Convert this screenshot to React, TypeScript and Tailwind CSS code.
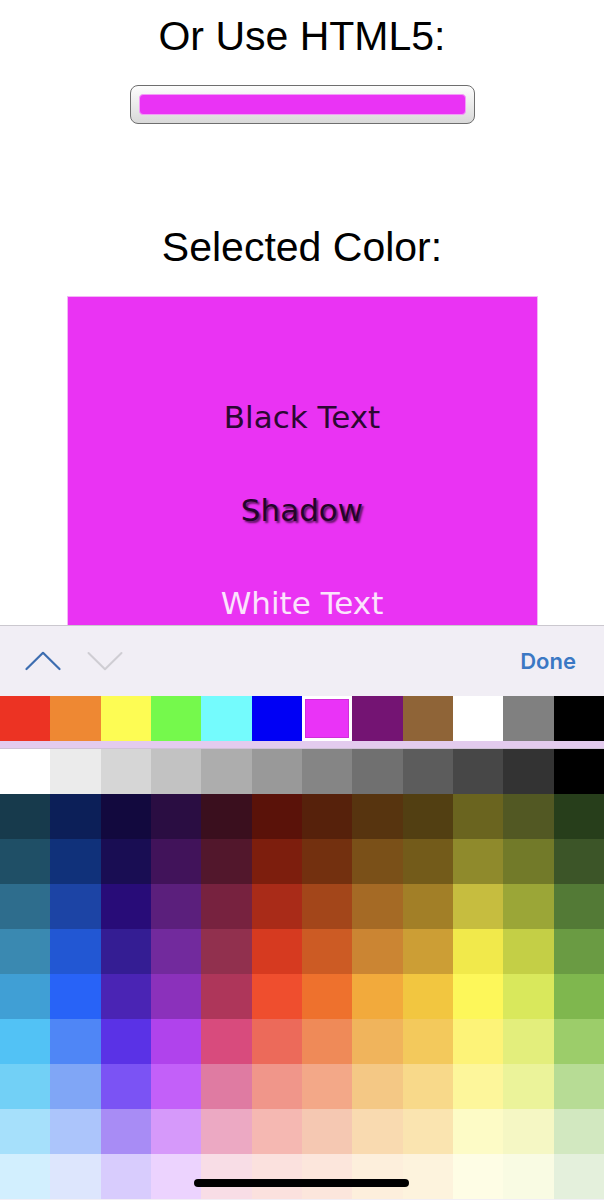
import React from "react";

const topRow = [
  "#ec3323", "#ee8833", "#fdfc54", "#75f94c", "#74fbfd", "#0000f5",
  "SEL", "#741473", "#8f6437", "#ffffff", "#808080", "#000000",
];

const grid: string[][] = [
  ["#ffffff", "#ebebeb", "#d6d6d6", "#c2c2c2", "#adadad", "#999999", "#858585", "#707070", "#5c5c5c", "#474747", "#333333", "#000000"],
  ["#173a4c", "#0c1f58", "#12093e", "#2a0d42", "#3a0f1e", "#5a1209", "#56210b", "#57340f", "#523f12", "#6a641f", "#525823", "#273e1b"],
  ["#1f4f66", "#10317a", "#190d53", "#41135a", "#52172c", "#7d1e0d", "#73300f", "#7a5018", "#735b1a", "#8f8a2c", "#727a29", "#3c5528"],
  ["#2e6d8d", "#1c44a5", "#280c78", "#5b1f7c", "#77223f", "#a92b18", "#a3461a", "#a56a25", "#a27f27", "#c6bd3f", "#9ba637", "#537a36"],
  ["#3a89b1", "#2257d3", "#341d93", "#722a9d", "#91304e", "#d63a20", "#cc5b24", "#cb8533", "#cc9e35", "#f1e94b", "#c4cf46", "#6a9b43"],
  ["#409fd5", "#2863f7", "#4a24b4", "#8b31bb", "#ae365a", "#ef4e2e", "#ee712d", "#f2aa3c", "#f2c640", "#fdf75a", "#d9e85c", "#7fb74e"],
  ["#52c2f5", "#4f86f6", "#5a32e6", "#b043ec", "#d84b7d", "#ec6a5a", "#ef8a58", "#f0b45c", "#f3c95c", "#fdf378", "#e3ee7c", "#9ccd6a"],
  ["#72d0f6", "#80a6f6", "#7b53f4", "#c360f9", "#df7ba2", "#f0968a", "#f3a888", "#f4c885", "#f8d98a", "#fdf69b", "#ebf39a", "#b7dc95"],
  ["#a6e0fb", "#acc5fb", "#a88cf5", "#d699fa", "#eca9c3", "#f5b8b2", "#f5c8b2", "#f9dab0", "#fae4b0", "#fdfbc6", "#f5f7c4", "#d2e8c0"],
  ["#d2effe", "#dde6fd", "#d8ccfd", "#ecd3fe", "#f8dde6", "#fbe1de", "#fce6dc", "#fdefdc", "#fdf3dd", "#fefde5", "#f9fbe3", "#e4f0dc"],
];

export default function App() {
  return (
    <div className="relative h-[1200px] w-[604px] overflow-hidden bg-white">
      {/* Page content */}
      <div className="flex flex-col items-center pt-[13px]">
        <h1
          className="text-[41px] leading-[47px] text-black"
          style={{ fontFamily: '"Liberation Sans", Arial, sans-serif' }}
        >
          Or Use HTML5:
        </h1>
        <div className="mt-[25px] flex h-[39px] w-[345px] items-center justify-center rounded-[8px] border border-[#6e6e6e] bg-gradient-to-b from-[#fdfdfd] to-[#d9d9d9] px-[8px]">
          <div className="h-[21px] w-full rounded-[4px] border border-[#f29cf7] bg-[#ea33f5]" />
        </div>
        <h2
          className="mt-[100px] text-[41px] leading-[47px] text-black"
          style={{ fontFamily: '"Liberation Sans", Arial, sans-serif' }}
        >
          Selected Color:
        </h2>
        <div
          className="mt-[25px] flex h-[420px] w-[471px] flex-col items-center gap-[57px] border border-[#f3b6f6] bg-[#ea33f3] pt-[102px] text-[31px] leading-[36px]"
          style={{ fontFamily: '"DejaVu Sans", Verdana, sans-serif' }}
        >
          <div className="text-[#2c0832]">Black Text</div>
          <div className="text-[#24042a] [text-shadow:2px_2px_2px_rgba(0,0,0,0.6)]">Shadow</div>
          <div className="text-[#fbe4fc]">White Text</div>
        </div>
      </div>

      {/* Color picker overlay */}
      <div className="absolute inset-x-0 top-[625px] bottom-0 flex flex-col border-t border-[#cbc8cf] bg-[#f1eef5]">
        <div className="flex h-[70px] items-center justify-between pl-[25px] pr-[28px]">
          <div className="flex items-center gap-[26px]">
            <svg width="36" height="20" viewBox="0 0 36 20" fill="none">
              <path d="M1.5 18 L18 1.8 L34.5 18" stroke="#3d6db0" strokeWidth="2.2" strokeLinecap="round" strokeLinejoin="round" />
            </svg>
            <svg width="36" height="20" viewBox="0 0 36 20" fill="none">
              <path d="M1.5 2 L18 18.2 L34.5 2" stroke="#cfcdd3" strokeWidth="2" strokeLinecap="round" strokeLinejoin="round" />
            </svg>
          </div>
          <span
            className="text-[22px] font-semibold text-[#3b78c4]"
            style={{ fontFamily: 'Inter, "Liberation Sans", sans-serif' }}
          >
            Done
          </span>
        </div>
        <div className="grid h-[45px] grid-cols-12">
          {topRow.map((c, i) =>
            c === "SEL" ? (
              <div key={i} className="bg-white px-[3px] py-[3px]">
                <div className="h-full w-full border border-[#d02ed9] bg-[#ea33f7]" />
              </div>
            ) : (
              <div key={i} style={{ backgroundColor: c }} />
            )
          )}
        </div>
        <div className="h-[8px] border-b border-[#cfc2d6] bg-[#e3cbee]" />
        <div className="grid grid-cols-12">
          {grid.map((row, r) =>
            row.map((c, i) => (
              <div key={`${r}-${i}`} className="h-[45px]" style={{ backgroundColor: c }} />
            ))
          )}
        </div>
      </div>

      {/* Home indicator */}
      <div className="absolute bottom-[13px] left-[194px] h-[8px] w-[215px] rounded-full bg-black" />
    </div>
  );
}
